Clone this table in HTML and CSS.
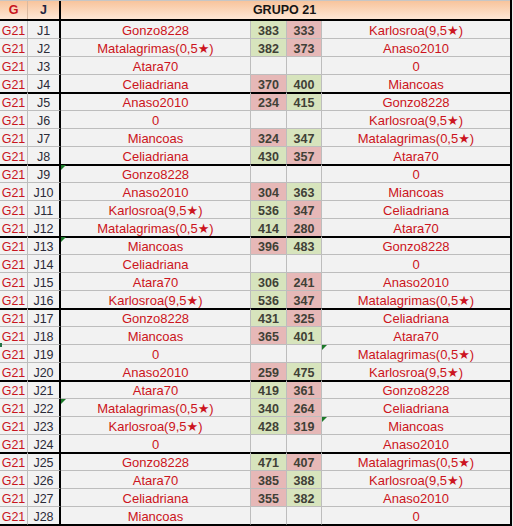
FILE: index.html
```html
<!DOCTYPE html>
<html>
<head>
<meta charset="utf-8">
<link rel="stylesheet" href="styles.css">
</head>
<body>
<div class="sheet">
  <div class="head">
    <div class="c hg">G</div>
    <div class="c hj">J</div>
    <div class="c ht">GRUPO 21</div>
  </div>
  <div class="rows">
    <div class="row"><div class="c g">G21</div><div class="c j">J1</div><div class="c n">Gonzo8228</div><div class="c s gr">383</div><div class="c s pk">333</div><div class="c n n2">Karlosroa(9,5★)</div></div>
    <div class="row"><div class="c g">G21</div><div class="c j">J2</div><div class="c n">Matalagrimas(0,5★)</div><div class="c s gr">382</div><div class="c s pk">373</div><div class="c n n2">Anaso2010</div></div>
    <div class="row"><div class="c g">G21</div><div class="c j">J3</div><div class="c n">Atara70</div><div class="c s"></div><div class="c s"></div><div class="c n n2">0</div></div>
    <div class="row end"><div class="c g">G21</div><div class="c j">J4</div><div class="c n">Celiadriana</div><div class="c s pk">370</div><div class="c s gr">400</div><div class="c n n2">Miancoas</div></div>

    <div class="row start"><div class="c g">G21</div><div class="c j">J5</div><div class="c n">Anaso2010</div><div class="c s pk">234</div><div class="c s gr">415</div><div class="c n n2">Gonzo8228</div></div>
    <div class="row"><div class="c g">G21</div><div class="c j">J6</div><div class="c n">0</div><div class="c s"></div><div class="c s"></div><div class="c n n2">Karlosroa(9,5★)</div></div>
    <div class="row"><div class="c g">G21</div><div class="c j">J7</div><div class="c n">Miancoas</div><div class="c s pk">324</div><div class="c s gr">347</div><div class="c n n2">Matalagrimas(0,5★)</div></div>
    <div class="row end"><div class="c g">G21</div><div class="c j">J8</div><div class="c n">Celiadriana</div><div class="c s gr">430</div><div class="c s pk">357</div><div class="c n n2">Atara70</div></div>

    <div class="row start"><div class="c g">G21</div><div class="c j">J9</div><div class="c n mark">Gonzo8228</div><div class="c s"></div><div class="c s"></div><div class="c n n2">0</div></div>
    <div class="row"><div class="c g">G21</div><div class="c j">J10</div><div class="c n">Anaso2010</div><div class="c s pk">304</div><div class="c s gr">363</div><div class="c n n2">Miancoas</div></div>
    <div class="row"><div class="c g">G21</div><div class="c j">J11</div><div class="c n">Karlosroa(9,5★)</div><div class="c s gr">536</div><div class="c s pk">347</div><div class="c n n2">Celiadriana</div></div>
    <div class="row end"><div class="c g">G21</div><div class="c j">J12</div><div class="c n">Matalagrimas(0,5★)</div><div class="c s gr">414</div><div class="c s pk">280</div><div class="c n n2">Atara70</div></div>

    <div class="row start"><div class="c g">G21</div><div class="c j">J13</div><div class="c n mark">Miancoas</div><div class="c s pk">396</div><div class="c s gr">483</div><div class="c n n2">Gonzo8228</div></div>
    <div class="row"><div class="c g">G21</div><div class="c j">J14</div><div class="c n">Celiadriana</div><div class="c s"></div><div class="c s"></div><div class="c n n2">0</div></div>
    <div class="row"><div class="c g">G21</div><div class="c j">J15</div><div class="c n">Atara70</div><div class="c s gr">306</div><div class="c s pk">241</div><div class="c n n2">Anaso2010</div></div>
    <div class="row end"><div class="c g">G21</div><div class="c j">J16</div><div class="c n">Karlosroa(9,5★)</div><div class="c s gr">536</div><div class="c s pk">347</div><div class="c n n2">Matalagrimas(0,5★)</div></div>

    <div class="row start"><div class="c g">G21</div><div class="c j">J17</div><div class="c n">Gonzo8228</div><div class="c s gr">431</div><div class="c s pk">325</div><div class="c n n2">Celiadriana</div></div>
    <div class="row"><div class="c g">G21</div><div class="c j">J18</div><div class="c n">Miancoas</div><div class="c s pk">365</div><div class="c s gr">401</div><div class="c n n2">Atara70</div></div>
    <div class="row"><div class="c g side">G21</div><div class="c j">J19</div><div class="c n">0</div><div class="c s"></div><div class="c s"></div><div class="c n n2 mark">Matalagrimas(0,5★)</div></div>
    <div class="row end"><div class="c g">G21</div><div class="c j">J20</div><div class="c n">Anaso2010</div><div class="c s pk">259</div><div class="c s gr">475</div><div class="c n n2">Karlosroa(9,5★)</div></div>

    <div class="row start"><div class="c g">G21</div><div class="c j">J21</div><div class="c n">Atara70</div><div class="c s gr">419</div><div class="c s pk">361</div><div class="c n n2">Gonzo8228</div></div>
    <div class="row"><div class="c g">G21</div><div class="c j">J22</div><div class="c n mark">Matalagrimas(0,5★)</div><div class="c s gr">340</div><div class="c s pk">264</div><div class="c n n2">Celiadriana</div></div>
    <div class="row"><div class="c g">G21</div><div class="c j">J23</div><div class="c n">Karlosroa(9,5★)</div><div class="c s gr">428</div><div class="c s pk">319</div><div class="c n n2 mark">Miancoas</div></div>
    <div class="row end"><div class="c g">G21</div><div class="c j">J24</div><div class="c n">0</div><div class="c s"></div><div class="c s"></div><div class="c n n2">Anaso2010</div></div>

    <div class="row start"><div class="c g">G21</div><div class="c j">J25</div><div class="c n">Gonzo8228</div><div class="c s gr">471</div><div class="c s pk">407</div><div class="c n n2">Matalagrimas(0,5★)</div></div>
    <div class="row"><div class="c g">G21</div><div class="c j">J26</div><div class="c n">Atara70</div><div class="c s pk">385</div><div class="c s gr">388</div><div class="c n n2">Karlosroa(9,5★)</div></div>
    <div class="row"><div class="c g">G21</div><div class="c j">J27</div><div class="c n">Celiadriana</div><div class="c s pk">355</div><div class="c s gr">382</div><div class="c n n2">Anaso2010</div></div>
    <div class="row end"><div class="c g">G21</div><div class="c j">J28</div><div class="c n">Miancoas</div><div class="c s"></div><div class="c s"></div><div class="c n n2">0</div></div>
  </div>
</div>
</body>
</html>
```

FILE: styles.css
```css
* { box-sizing: border-box; }
html, body { margin: 0; padding: 0; }
body {
  background: #e9e9e9;
  font-family: "Liberation Sans", Arial, "DejaVu Sans", sans-serif;
  width: 513px;
  height: 526px;
  overflow: hidden;
}
.sheet {
  width: 512px;
  border-right: 2px solid #000;
  border-bottom: 1px solid #000;
  background: #f2f2f2;
}
.head {
  display: grid;
  grid-template-columns: 28px 33px 1fr;
  height: 21px;
  border-top: 1px solid #c6c6c6;
  border-bottom: 2px solid #000;
  background: linear-gradient(#f8c49c, #fde7d6);
}
.head .c {
  font-weight: bold;
  font-size: 12.5px;
  line-height: 17px;
  text-align: center;
  padding-top: 1px;
}
.hg { color: #c8141e; border-right: 1px solid #d9b9a0; }
.hj { color: #1d2440; border-right: 2px solid #000; }
.ht { color: #151515; padding-right: 2px; }

.row {
  display: grid;
  grid-template-columns: 28px 33px 190px 36px 35px 188px;
  height: 18px;
}
.row .c {
  height: 18px;
  border-right: 1px solid #bdbdbd;
  border-bottom: 1px solid #bdbdbd;
  text-align: center;
  line-height: 16px;
  padding-top: 2px;
  white-space: nowrap;
  overflow: visible;
  position: relative;
}
.row.end .c { border-bottom-color: #000; }
.row.start .c { box-shadow: inset 0 1px 0 #000; }
.row .c.j { border-right: 2px solid #000; }
.row .c.n2 { border-right: none; }

.g { color: #c8141e; font-size: 12.5px; }
.j { color: #2b2b38; font-size: 12.5px; }
.n { color: #cc1420; font-size: 13px; }
.s { color: #404036; font-size: 12.5px; font-weight: bold; }
.gr { background: #d7e4bd; }
.pk { background: #e6b8b7; }

.mark::before {
  content: "";
  position: absolute;
  left: 0;
  top: 0;
  border-top: 5px solid #1c7a2a;
  border-right: 5px solid transparent;
}
.side::before {
  content: "";
  position: absolute;
  left: 0;
  top: -2px;
  width: 2px;
  height: 4px;
  background: #217346;
}
```
